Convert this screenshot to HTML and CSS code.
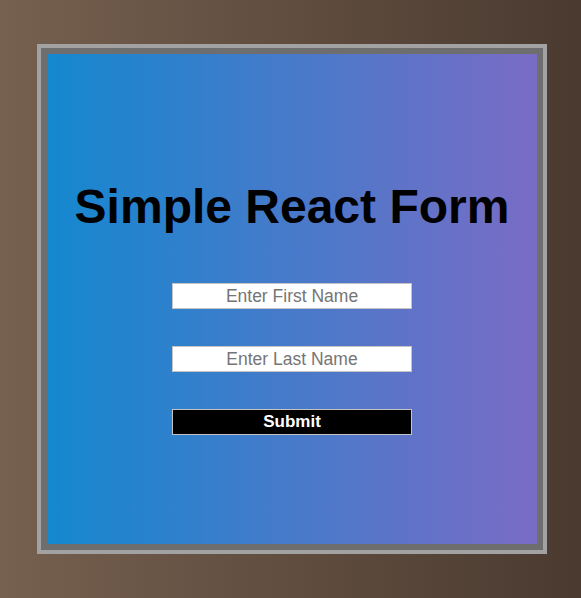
FILE: index.html
```html
<!DOCTYPE html>
<html>
<head>
<meta charset="utf-8">
<link rel="stylesheet" href="styles.css">
</head>
<body>
<div class="frame">
  <div class="panel">
    <h1 class="title">Simple React Form</h1>
    <form class="form">
      <input class="field" type="text" placeholder="Enter First Name">
      <input class="field" type="text" placeholder="Enter Last Name">
      <button class="submit" type="button">Submit</button>
    </form>
  </div>
</div>
</body>
</html>
```

FILE: styles.css
```css
html, body {
  margin: 0;
  padding: 0;
  height: 100%;
}
body {
  background: linear-gradient(to right, #76604f, #4a3a30);
  font-family: "Liberation Sans", Arial, sans-serif;
  display: flex;
  align-items: flex-start;
}
.frame {
  margin: 44px 0 0 37px;
  border: 4px solid #a2a2a2;
}
.panel {
  width: 490px;
  height: 490px;
  border: 6px solid #6e6e6e;
  background: linear-gradient(to right, #1488cf, #7a6cc5);
  display: flex;
  flex-direction: column;
  align-items: center;
}
.title {
  margin: 125px 0 0 0;
  font-size: 48px;
  line-height: 55px;
  font-weight: bold;
  color: #000;
}
.form {
  margin-top: 49px;
  display: flex;
  flex-direction: column;
  align-items: center;
  gap: 37px;
}
.field, .submit {
  box-sizing: border-box;
  width: 240px;
  height: 26px;
  margin: 0;
  border: 1px solid #c4c4c4;
  font-family: "Liberation Sans", Arial, sans-serif;
  text-align: center;
  padding: 0;
}
.field {
  background: #fff;
  font-size: 17.5px;
  color: #333;
}
.field::placeholder {
  color: #757575;
}
.submit {
  background: #000;
  color: #fff;
  font-size: 17px;
  font-weight: bold;
}
```
